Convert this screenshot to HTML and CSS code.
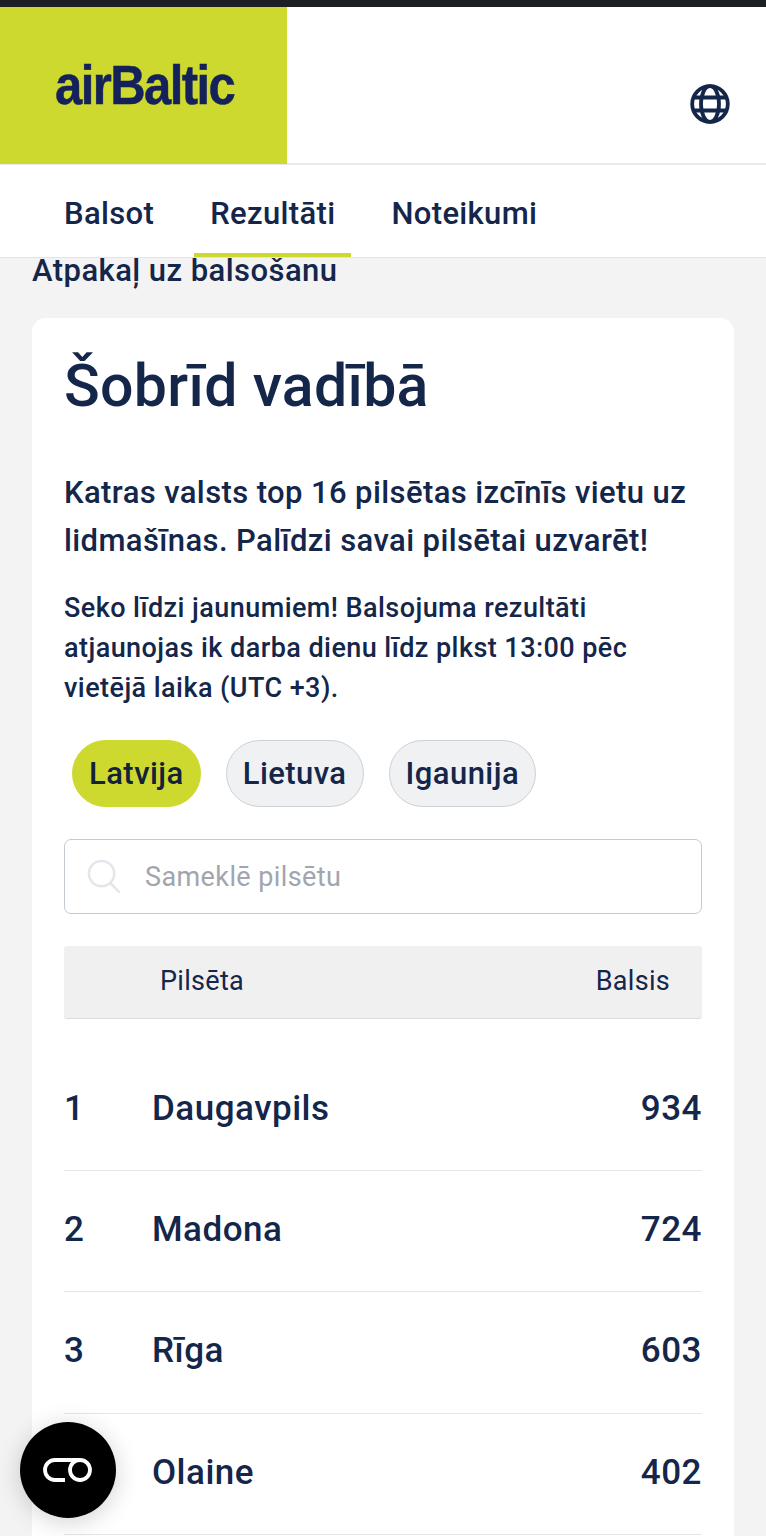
FILE: index.html
```html
<!DOCTYPE html>
<html lang="lv">
<head>
<meta charset="utf-8">
<title>airBaltic</title>
<link rel="stylesheet" href="styles.css">
</head>
<body>
<div class="topbar"></div>
<header class="header">
  <div class="logo-box"><span class="logo">airBaltic</span></div>
  <svg class="globe" viewBox="0 0 40 40" fill="none" stroke="#14264a" stroke-width="3.8">
    <circle cx="20" cy="20" r="17.8"/>
    <ellipse cx="20" cy="20" rx="9" ry="17.8"/>
    <path d="M4 13.5H36M4 26.5H36"/>
  </svg>
</header>
<nav class="nav">
  <a class="tab">Balsot</a>
  <a class="tab active">Rezultāti</a>
  <a class="tab">Noteikumi</a>
</nav>
<main class="main">
  <a class="back">Atpakaļ uz balsošanu</a>
  <section class="card">
    <h1 class="title">Šobrīd vadībā</h1>
    <p class="lead">Katras valsts top 16 pilsētas izcīnīs vietu uz lidmašīnas. Palīdzi savai pilsētai uzvarēt!</p>
    <p class="note">Seko līdzi jaunumiem! Balsojuma rezultāti atjaunojas ik darba dienu līdz plkst 13:00 pēc vietējā laika (UTC +3).</p>
    <div class="pills">
      <button class="pill on">Latvija</button>
      <button class="pill">Lietuva</button>
      <button class="pill">Igaunija</button>
    </div>
    <div class="search">
      <svg class="search-icon" viewBox="0 0 36 36" fill="none" stroke="#e3e6ea" stroke-width="2.6">
        <circle cx="15" cy="15" r="13"/>
        <path d="M24.5 25L33 34" stroke-linecap="round"/>
      </svg>
      <span class="placeholder">Sameklē pilsētu</span>
    </div>
    <div class="thead"><span class="th-city">Pilsēta</span><span>Balsis</span></div>
    <div class="rows">
      <div class="row"><span class="rank">1</span><span class="city">Daugavpils</span><span>934</span></div>
      <div class="row"><span class="rank">2</span><span class="city">Madona</span><span>724</span></div>
      <div class="row"><span class="rank">3</span><span class="city">Rīga</span><span>603</span></div>
      <div class="row"><span class="rank">4</span><span class="city">Olaine</span><span>402</span></div>
    </div>
  </section>
</main>
<button class="fab" aria-label="Piekļūstamība">
  <svg viewBox="0 0 50 26" width="50" height="26" fill="none" stroke="#fff" stroke-width="3.8">
    <path d="M37 3H12a10 10 0 0 0 0 20H22"/>
    <circle cx="37" cy="13" r="10"/>
  </svg>
</button>
</body>
</html>
```
FILE: styles.css
```css
* { box-sizing: border-box; }
html, body { margin: 0; height: 1536px; overflow: hidden; }
body {
  background: #f3f3f3;
  color: #14264a;
  font-family: Roboto, "Liberation Sans", sans-serif;
  font-weight: 500;
}
.topbar { height: 7px; background: #1c1f24; }
.header {
  height: 158px;
  background: #fff;
  border-bottom: 2px solid #e9e9e9;
  display: flex;
  justify-content: space-between;
  align-items: flex-start;
}
.logo-box {
  width: 287px;
  height: 157px;
  background: #cdd92e;
  display: flex;
  align-items: center;
  padding: 0 0 3px 55px;
}
.logo {
  font-family: "Liberation Sans", sans-serif;
  font-weight: 700;
  font-size: 56px;
  letter-spacing: -1.8px;
  color: #14215a;
  -webkit-text-stroke: 0.5px #14215a;
  transform: scaleX(.875);
  transform-origin: left center;
}
.globe { width: 40px; height: 40px; margin: 77px 36px 0 0; }
.nav {
  height: 93px;
  background: #fff;
  border-bottom: 1px solid #e4e4e4;
  display: flex;
  padding-left: 48px;
  gap: 24px;
}
.tab {
  padding: 0 16px;
  font-size: 31px;
  line-height: 98px;
  height: 92px;
  white-space: nowrap;
  letter-spacing: 0.35px;
}
.tab.active { border-bottom: 4px solid #cdd92e; }
.main { padding: 0 32px; }
.back {
  display: block;
  font-size: 31px;
  line-height: 26px;
  height: 60px;
  letter-spacing: 0.45px;
}
.card {
  background: #fff;
  border-radius: 14px;
  padding: 33px 32px 0;
  height: 1300px;
}
.title { margin: 0; font-size: 59px; line-height: 70px; font-weight: 500; letter-spacing: 0.3px; }
.lead { margin: 48px 0 0; font-size: 31px; line-height: 48px; letter-spacing: 0.4px; }
.note { margin: 23px 0 0; font-size: 27px; line-height: 40px; letter-spacing: 0.44px; }
.pills { display: flex; gap: 25px; margin: 32px 0 0 8px; }
.pill {
  height: 67px;
  padding: 0 16px;
  border-radius: 34px;
  border: 1.5px solid #ccd0d6;
  background: #f0f1f3;
  color: #14264a;
  font: 500 31px Roboto, sans-serif;
  letter-spacing: 0.45px;
}
.pill.on { background: #cdd92e; border-color: #cdd92e; color: #14213a; }
.search {
  margin-top: 32px;
  height: 75px;
  border: 1.5px solid #c3cbd1;
  border-radius: 7px;
  display: flex;
  align-items: center;
  padding-left: 22px;
  gap: 23px;
}
.search-icon { width: 35px; height: 35px; }
.placeholder { font-size: 27px; font-weight: 400; color: #a1a5ae; letter-spacing: 0.4px; }
.thead {
  margin-top: 32px;
  height: 73px;
  background: #f0f0f0;
  border-bottom: 1.5px solid #dcdcdc;
  border-radius: 3px;
  display: flex;
  justify-content: space-between;
  align-items: center;
  padding: 0 32px 2px 96px;
  font-size: 27px;
  font-weight: 400;
  letter-spacing: 0.3px;
}
.rows { margin-top: 31px; }
.row {
  height: 121.2px;
  border-bottom: 1.5px solid #e6e6e6;
  display: flex;
  align-items: center;
  padding-bottom: 3px;
  font-size: 35px;
  letter-spacing: 0.5px;
}
.rank { width: 88px; }
.city { flex: 1; }
.fab {
  position: fixed;
  left: 20px;
  top: 1422px;
  width: 96px;
  height: 96px;
  border-radius: 50%;
  border: 0;
  padding: 0;
  background: #000;
  box-shadow: 0 4px 24px rgba(0,0,0,.18);
  display: flex;
  align-items: center;
  justify-content: center;
}
```
